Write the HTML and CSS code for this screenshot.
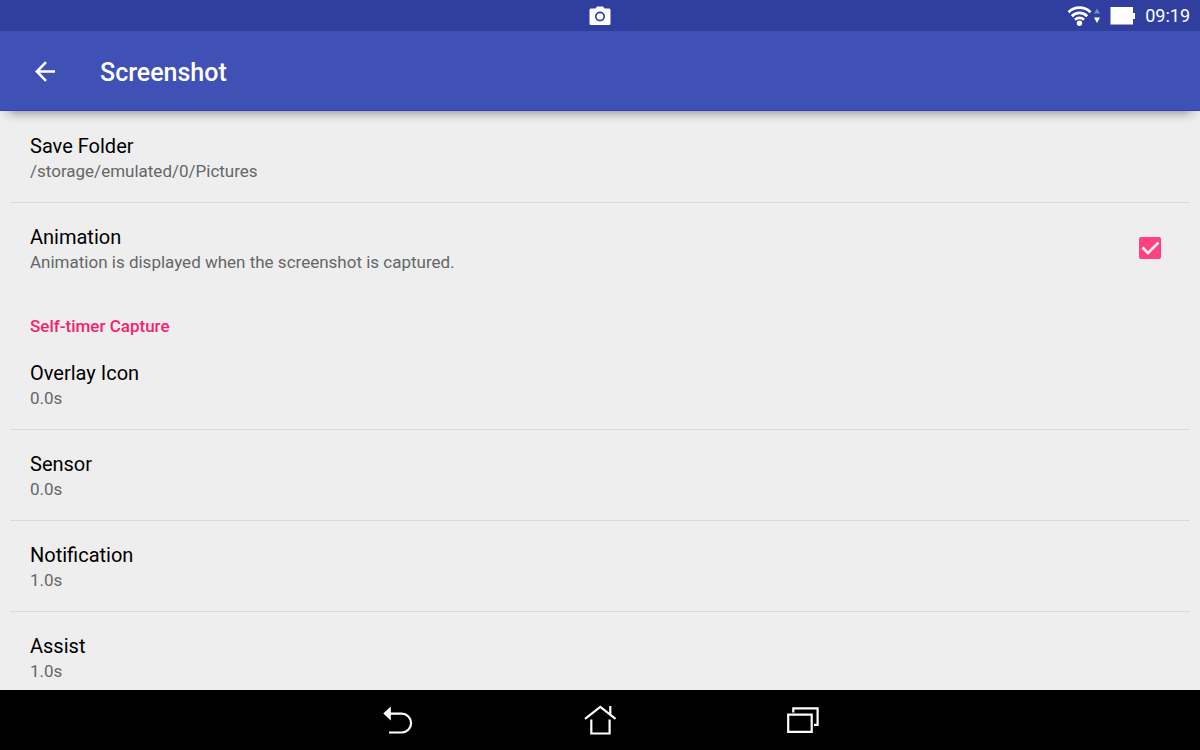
FILE: index.html
```html
<!DOCTYPE html>
<html lang="en">
<head>
<meta charset="UTF-8">
<meta name="viewport" content="width=device-width, initial-scale=1.0">
<title>Screenshot</title>
<link rel="stylesheet" href="styles.css">
</head>
<body>

<div class="status-bar">
  <svg class="camera" width="22" height="20" viewBox="0 0 22 20">
    <path fill="#fff" fill-rule="evenodd" d="M2 2.500h4.500L8 .5h6l1.500 2H20a1.500 1.500 0 0 1 1.500 1.500v13.500a1.500 1.500 0 0 1-1.500 1.500H2A1.500 1.500 0 0 1 .5 17.500V4A1.500 1.500 0 0 1 2 2.500zM11 5.500a5 5 0 1 0 0 10 5 5 0 0 0 0-10z"/>
    <circle cx="11" cy="10.500" r="3.300" fill="#fff"/>
  </svg>
  <div class="status-icons">
    <svg width="33" height="22" viewBox="0 0 33 22">
      <g fill="none" stroke="#fff" stroke-width="2.700">
        <path d="M1.500 7.300a15.500 15.500 0 0 1 22 0"/>
        <path d="M4.800 11.200a10.700 10.700 0 0 1 15.400 0"/>
        <path d="M8 14.800a6.300 6.300 0 0 1 9 0"/>
      </g>
      <circle cx="12.500" cy="18.200" r="2.700" fill="#fff"/>
      <path fill="#8088c5" d="M27 8.500l3-5 3 5z"/>
      <path fill="#fff" d="M27 12.500l3 5.500 3-5.500z"/>
    </svg>
    <svg width="25" height="18" viewBox="0 0 25 18">
      <path fill="#fff" d="M.5 0H23v6h2v6h-2v5.500H.5z"/>
    </svg>
    <span class="clock">09:19</span>
  </div>
</div>

<header class="toolbar">
  <button class="icon-button" aria-label="Navigate up">
    <svg width="22" height="22" viewBox="0 0 22 22" fill="none" stroke="#fff" stroke-width="2.500">
      <path d="M21 11.500H3M12 2.200l-9.200 9.300 9.200 9.300"/>
    </svg>
  </button>
  <h1>Screenshot</h1>
</header>

<main class="settings">
  <button class="item">
    <span class="title">Save Folder</span>
    <span class="summary">/storage/emulated/0/Pictures</span>
  </button>
  <label class="item last" for="animation">
    <span class="title">Animation</span>
    <span class="summary">Animation is displayed when the screenshot is captured.</span>
    <input type="checkbox" id="animation" checked>
    <svg class="tick" width="22" height="22" viewBox="0 0 22 22">
      <path fill="none" stroke="#eee" stroke-width="2.700" d="M3.500 10.500l5.500 5.500L19.500 5.500"/>
    </svg>
  </label>

  <h2>Self-timer Capture</h2>
  <button class="item">
    <span class="title">Overlay Icon</span>
    <span class="summary">0.0s</span>
  </button>
  <button class="item">
    <span class="title">Sensor</span>
    <span class="summary">0.0s</span>
  </button>
  <button class="item">
    <span class="title">Notification</span>
    <span class="summary">1.0s</span>
  </button>
  <button class="item">
    <span class="title">Assist</span>
    <span class="summary">1.0s</span>
  </button>
</main>

<nav class="nav-bar">
  <button class="nav-button" aria-label="Back">
    <svg width="34" height="34" viewBox="0 0 34 34">
      <path fill="none" stroke="#fff" stroke-width="2.200" d="M8 10.700h12.700a9.300 9.300 0 0 1 0 18.800H8"/>
      <path fill="#fff" d="M2.300 10.500l7.500-7v14z"/>
    </svg>
  </button>
  <button class="nav-button" aria-label="Home">
    <svg width="34" height="34" viewBox="0 0 34 34" fill="none" stroke="#fff" stroke-width="2.200">
      <path d="M2 15.800L17.300 3.800l15.200 12M27.300 11.500V3M8.300 16.500V30.500h18.300V16.500"/>
    </svg>
  </button>
  <button class="nav-button" aria-label="Recent apps">
    <svg width="34" height="34" viewBox="0 0 34 34" fill="none" stroke="#fff" stroke-width="2.200">
      <path d="M3.200 11.700h23.500v17.200H3.200zM8.300 9.500V5.300h24.300v16.600H29"/>
    </svg>
  </button>
</nav>

</body>
</html>
```
FILE: styles.css
```css
body {
  margin: 0;
  height: 100vh;
  display: flex;
  flex-direction: column;
  overflow: hidden;
  background-color: #eee;
  color: #000;
  font-family: Roboto, sans-serif;
}
button {
  border: none;
  padding: 0;
  background: none;
  color: inherit;
  font-family: inherit;
  text-align: left;
  cursor: pointer;
}
svg {
  display: block;
  overflow: visible;
}

/* status bar */
.status-bar {
  flex: none;
  height: 31px;
  display: grid;
  grid-template-columns: 1fr auto 1fr;
  align-items: center;
  background-color: #303f9f;
  color: #fff;
}
.camera {
  grid-column: 2;
}
.status-icons {
  display: flex;
  align-items: center;
  justify-content: flex-end;
  gap: 10px;
  padding-right: 10px;
}
.clock {
  font-size: 18px;
  line-height: 30px;
}

/* toolbar */
.toolbar {
  position: relative;
  flex: none;
  height: 80px;
  box-sizing: border-box;
  display: flex;
  align-items: center;
  background-color: #3f51b5;
  border-bottom: 1px solid #2f45b5;
  box-shadow: 0 10px 10px -8px rgba(0, 0, 0, 0.4);
}
.icon-button {
  width: 90px;
  height: 79px;
  display: flex;
  align-items: center;
  justify-content: center;
}
.toolbar h1 {
  margin: 0 0 0 10px;
  padding-top: 4px;
  color: #fff;
  font-size: 25px;
  font-weight: 500;
}

/* preference list */
.settings {
  flex: 1;
  min-height: 0;
  padding-top: 1px;
  overflow: hidden;
}
.item {
  position: relative;
  display: block;
  width: calc(100% - 20px);
  margin: 0 10px;
  padding: 21px 20px 19px;
  box-sizing: border-box;
  border-bottom: 1px solid #dadada;
}
.item.last {
  border-bottom: none;
}
.title {
  display: block;
  font-size: 20px;
  line-height: 26px;
}
.summary {
  display: block;
  color: #666;
  font-size: 17px;
  line-height: 24px;
}
.item input,
.tick {
  position: absolute;
  top: 50%;
  right: 29px;
  width: 22px;
  height: 22px;
  margin: -11px 0 0;
}
.item input {
  appearance: none;
  border-radius: 2px;
}
.item input:checked {
  background-color: #ff4081;
}
.tick {
  visibility: hidden;
}
.item input:checked + .tick {
  visibility: visible;
}
.settings h2 {
  margin: 0;
  padding: 21px 30px 1px;
  color: #f91e6e;
  font-size: 17px;
  font-weight: 500;
  line-height: 24px;
}

/* navigation bar */
.nav-bar {
  flex: none;
  height: 60px;
  display: flex;
  align-items: center;
  justify-content: center;
  background-color: #000;
}
.nav-button {
  width: 202px;
  height: 60px;
  display: flex;
  align-items: center;
  justify-content: center;
}
```
